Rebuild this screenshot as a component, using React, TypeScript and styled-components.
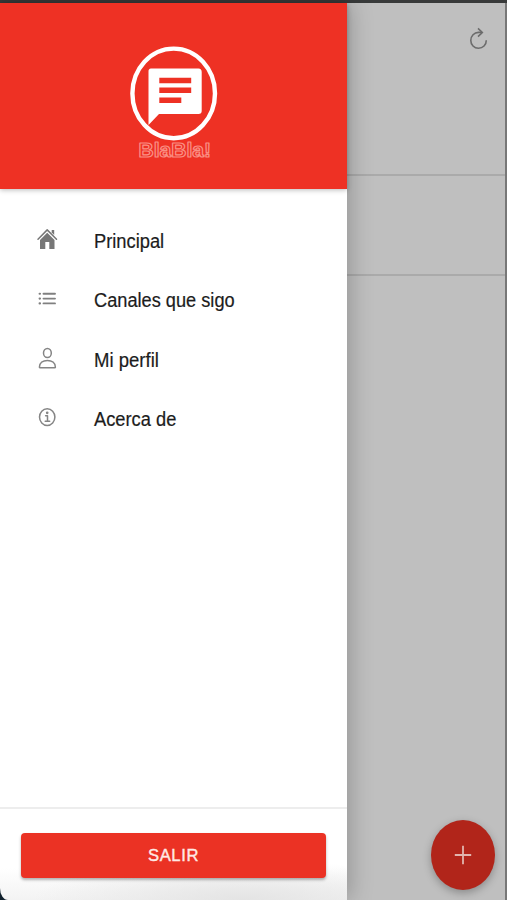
import React from "react";
import styled, { createGlobalStyle } from "styled-components";

const GlobalStyle = createGlobalStyle`
  * { box-sizing: border-box; }
  body { margin: 0; background: #bfbfbf; font-family: "Liberation Sans", Arial, sans-serif; }
`;

const Screen = styled.div`
  display: flex;
  flex-direction: column;
  width: 507px;
  height: 900px;
  overflow: hidden;
  background: #bfbfbf;
`;

const StatusStrip = styled.div`
  height: 3px;
  flex: none;
  background: #383a3a;
`;

const Body = styled.div`
  display: flex;
  flex: 1;
  min-height: 0;
`;

const Drawer = styled.aside`
  display: flex;
  flex-direction: column;
  width: 347px;
  background: #fff;
  z-index: 1;
  box-shadow: 3px 0 22px rgba(0, 0, 0, 0.23);
`;

const Brand = styled.header`
  height: 186px;
  flex: none;
  background: #ee3124;
  box-shadow: 0 1px 5px rgba(0, 0, 0, 0.28);
`;

const Logo = styled.svg`
  display: block;
  margin: 37px 0 0 124px;
`;

const LogoText = styled.text`
  font: bold 20.5px "Liberation Sans", Arial, sans-serif;
  fill: #ee3124;
  stroke: #fa8f84;
  stroke-width: 1.2px;
  stroke-linejoin: round;
`;

const Menu = styled.nav`
  display: flex;
  flex-direction: column;
  flex: 1;
  padding-top: 22px;
`;

const MenuItem = styled.a`
  display: flex;
  align-items: center;
  height: 59.5px;
  padding-left: 35px;
  color: #1c1c1c;
`;

const MenuIcon = styled.svg`
  width: 24px;
  height: 28px;
  margin: -4px 35px 0 0;
  fill: none;
  stroke: #858585;
  stroke-width: 1.5;
  stroke-linecap: round;
  stroke-linejoin: round;
`;

const Label = styled.span<{ $scale: number }>`
  font-size: 20px;
  line-height: 24px;
  white-space: nowrap;
  -webkit-text-stroke: 0.2px currentColor;
  transform: scaleX(${(p) => p.$scale});
  transform-origin: left center;
`;

const Footer = styled.footer`
  height: 93px;
  flex: none;
  padding: 24px 21px 0;
  border-top: 2px solid #ededed;
  border-bottom-left-radius: 8px 12px;
  background: radial-gradient(ellipse 210px 40px at 70% 100%, #e4e4e4, transparent),
    linear-gradient(#fff 65%, #f3f3f3);
`;

const Corner = styled.div`
  background: #10202c;
`;

const ExitButton = styled.button`
  display: block;
  width: 305px;
  height: 45px;
  padding: 0;
  border: 0;
  border-radius: 4px;
  background: #eb3224;
  box-shadow: 0 2px 3px rgba(0, 0, 0, 0.3);
  color: #ffe9e5;
  font: 16.6px/46px "Liberation Sans", Arial, sans-serif;
  letter-spacing: 0.6px;
  -webkit-text-stroke: 0.4px currentColor;
`;

const Page = styled.main`
  display: flex;
  flex-direction: column;
  flex: 1;
  border-right: 2px solid #777;
  background: #bfbfbf;
`;

const PageSection = styled.section<{ $height: number }>`
  display: flex;
  justify-content: flex-end;
  align-items: flex-start;
  height: ${(p) => p.$height}px;
  flex: none;
  border-bottom: 2px solid #aaa;
`;

const RefreshIcon = styled.svg`
  margin: 23px 14px 0 0;
  fill: none;
  stroke: #6c6c6c;
  stroke-width: 1.6;
`;

const AddButton = styled.button`
  display: grid;
  place-items: center;
  width: 64px;
  height: 70px;
  margin: auto 10px 10px auto;
  padding: 0;
  border: 0;
  border-radius: 50%;
  background: #b1251a;
  box-shadow: 0 3px 8px rgba(0, 0, 0, 0.28);
`;

const glyphs = {
  home: (
    <g fill="#777" stroke="none">
      <path d="M5 15 12.2 7.7 19.5 15V24H14.3V17H10.3V24H5Z" />
      <path d="M16.7 5H19.2V10L16.7 7.6Z" />
      <path d="M3 14.2 12.2 4.9 21.5 14.2" fill="none" stroke="#777" strokeWidth="1.5" />
    </g>
  ),
  list: (
    <g strokeWidth="1.9" stroke="#808080">
      <path d="M8.5 9.8H20M8.5 14.6H20M8.5 19.4H20" />
      <path d="M4.6 9.8H5M4.6 14.6H5M4.6 19.4H5" strokeWidth="2.1" />
    </g>
  ),
  person: (
    <>
      <ellipse cx="12.4" cy="9" rx="3.9" ry="4.6" />
      <path d="M4.4 23.3C4.4 18.8 8 16.5 12.4 16.5S20.4 18.8 20.4 23.3Q20.4 23.8 19.5 23.8H5.3Q4.4 23.8 4.4 23.3Z" />
    </>
  ),
  info: (
    <>
      <ellipse cx="12.2" cy="14.1" rx="7.7" ry="8.4" />
      <path d="M10.6 12.7H12.5V18.3M10.2 18.3H14.7" />
      <circle cx="12.2" cy="9.8" r=".6" fill="#777" />
    </>
  ),
};

const items: { icon: keyof typeof glyphs; label: string; scale: number }[] = [
  { icon: "home", label: "Principal", scale: 0.915 },
  { icon: "list", label: "Canales que sigo", scale: 0.91 },
  { icon: "person", label: "Mi perfil", scale: 0.927 },
  { icon: "info", label: "Acerca de", scale: 0.914 },
];

export default function App() {
  return (
    <>
      <GlobalStyle />
      <Screen>
        <StatusStrip />
        <Body>
          <Drawer>
            <Brand>
              <Logo width="100" height="125" viewBox="124 40 100 125">
                <ellipse cx="173.7" cy="93.4" rx="41.3" ry="44.8" fill="none" stroke="#fff" strokeWidth="4.4" />
                <path d="M151 68.5H198.5Q201.7 68.5 201.7 72V111Q201.7 114 198.5 114H159L148.5 125V72Q148.2 68.5 151 68.5Z" fill="#fff" />
                <path d="M159.3 80.5H191.2M159.3 90.3H191.2M159.3 100.2H181.3" stroke="#ee3124" strokeWidth="5.6" />
                <LogoText x="138.5" y="157.3" textLength="72.5" lengthAdjust="spacingAndGlyphs">BlaBla!</LogoText>
              </Logo>
            </Brand>
            <Menu>
              {items.map((item) => (
                <MenuItem key={item.label}>
                  <MenuIcon viewBox="0 0 24 28">{glyphs[item.icon]}</MenuIcon>
                  <Label $scale={item.scale}>{item.label}</Label>
                </MenuItem>
              ))}
            </Menu>
            <Corner>
              <Footer>
                <ExitButton>SALIR</ExitButton>
              </Footer>
            </Corner>
          </Drawer>
          <Page>
            <PageSection $height={173}>
              <RefreshIcon width="24" height="26" viewBox="467 26 24 26">
                <path d="M486.3 40.2C486.3 45 482.9 48.3 478.5 48.3S470.8 44.8 470.8 40.4 474.2 32.4 478.5 32.4H482" />
                <path d="M478 28.4 482.3 32.5 478 36.6" />
              </RefreshIcon>
            </PageSection>
            <PageSection $height={100} />
            <AddButton aria-label="+">
              <svg width="18" height="20" viewBox="0 0 18 20">
                <path d="M9 .8V19.2M.8 10H17.2" stroke="#e2b5ae" strokeWidth="1.8" />
              </svg>
            </AddButton>
          </Page>
        </Body>
      </Screen>
    </>
  );
}
